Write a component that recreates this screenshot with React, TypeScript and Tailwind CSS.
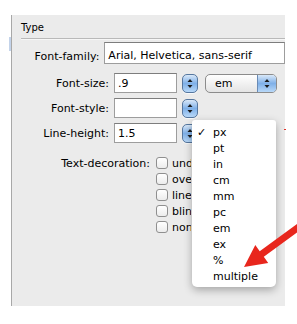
import React from "react";

const UNITS = ["px", "pt", "in", "cm", "mm", "pc", "em", "ex", "%", "multiple"];
const DECORATIONS = ["underline", "overline", "line-through", "blink", "none"];

function Arrows() {
  return (
    <svg width={6} height={11} viewBox="0 0 6 11" className="block">
      <path d="M3 1 L5.5 4 L0.5 4 Z" fill="#1a1a1a" />
      <path d="M3 10 L5.5 7 L0.5 7 Z" fill="#1a1a1a" />
    </svg>
  );
}

function Stepper() {
  return (
    <div className="w-[16px] h-[19px] flex-none rounded-[5px] border border-[#56779f] bg-linear-to-b from-[#d9e8f8] via-[#7fb0e8] to-[#b8d8f8] flex items-center justify-center shadow-[0_1px_0_rgba(255,255,255,0.7)]">
      <Arrows />
    </div>
  );
}

function Field({ value = "", w }: { value?: string; w: string }) {
  return (
    <div
      className={`${w} h-[20px] flex-none bg-white border border-[#9d9d9d] border-t-[#7d7d7d] pl-[3px] flex items-center`}
    >
      {value}
    </div>
  );
}

function Row({ label, children }: { label: string; children: React.ReactNode }) {
  return (
    <div className="flex items-center">
      <div className="w-[97px] text-right">{label}</div>
      <div className="ml-[5px] flex items-center gap-[5px]">{children}</div>
    </div>
  );
}

export default function App() {
  return (
    <div className="relative w-[297px] h-[324px] bg-white overflow-hidden text-[11px] text-black font-['DejaVu_Sans',sans-serif] leading-none">
      <div className="pl-[11px] pt-[15px]">
        <div className="relative w-[274px] h-[291px] bg-[#ebebeb] border-l border-[#a8a8a8] overflow-hidden">
          <div className="pl-[9px] pt-[8px] h-[23px] text-[10px]">Type</div>
          <div className="ml-[9px] h-px bg-[#b9b9b9]" />
          <div className="ml-[9px] h-px bg-[#f7f7f7]" />

          <div className="mt-[2px] flex flex-col">
            <div className="flex items-end h-[22px]">
              <div className="w-[97px] text-right pb-[2px]">Font-family:</div>
              <div className="ml-[5px] h-[22px] w-[200px] bg-white border border-[#9d9d9d] border-t-[#7d7d7d] pl-[3px] pb-[2px] flex items-end">
                Arial, Helvetica, sans-serif
              </div>
            </div>

            <div className="mt-[9px]">
              <Row label="Font-size:">
                <Field value=".9" w="w-[63px]" />
                <Stepper />
                <div className="ml-[2px] w-[72px] h-[19px] rounded-[5px] border border-[#8c8c8c] bg-linear-to-b from-white to-[#e4e4e4] flex items-center overflow-hidden">
                  <span className="pl-[9px] flex-1">em</span>
                  <div className="w-[19px] h-full bg-linear-to-b from-[#d9e8f8] via-[#7fb0e8] to-[#b8d8f8] border-l border-[#6a8bb5] flex items-center justify-center">
                    <Arrows />
                  </div>
                </div>
              </Row>
            </div>

            <div className="mt-[5px]">
              <Row label="Font-style:">
                <Field w="w-[63px]" />
                <Stepper />
              </Row>
            </div>

            <div className="mt-[5px]">
              <Row label="Line-height:">
                <Field value="1.5" w="w-[63px]" />
                <Stepper />
              </Row>
            </div>

            <div className="mt-[12px] flex">
              <div className="w-[138px] text-right h-[16px] flex items-center justify-end">
                Text-decoration:
              </div>
              <div className="ml-[6px] flex flex-col">
                {DECORATIONS.map((d) => (
                  <div key={d} className="h-[16px] flex items-center gap-[4px]">
                    <div className="w-[12px] h-[12px] flex-none rounded-[3px] border border-[#8f8f8f] bg-linear-to-b from-white to-[#ececec]" />
                    <span className="w-[19px] overflow-hidden whitespace-nowrap">{d}</span>
                  </div>
                ))}
              </div>
            </div>
          </div>
        </div>
      </div>

      <div className="absolute left-[9px] top-[37px] w-[2px] h-[14px] bg-[#c3d3ea]" />
      <div className="absolute left-[284px] top-[129px] w-[2px] h-px bg-[#e0342a]" />

      <div className="absolute left-[192px] top-[120px] w-[84px] h-[167px] bg-white rounded-b-[5px] rounded-t-[3px] shadow-[0_3px_9px_rgba(0,0,0,0.3)] py-[4px]">
        {UNITS.map((u, i) => (
          <div key={u} className="h-[16px] flex items-center">
            <span className="w-[21px] pl-[5px]">{i === 0 ? "✓" : ""}</span>
            <span>{u}</span>
          </div>
        ))}
      </div>

      <svg className="absolute left-0 top-0" width="297" height="324" viewBox="0 0 297 324">
        <path
          d="M244 267 L268.2 262.9 L263.8 256.8 L304.2 227.3 L300 221.7 L259.7 251.2 L255.3 245.1 Z"
          fill="#e8261d"
        />
      </svg>
    </div>
  );
}
